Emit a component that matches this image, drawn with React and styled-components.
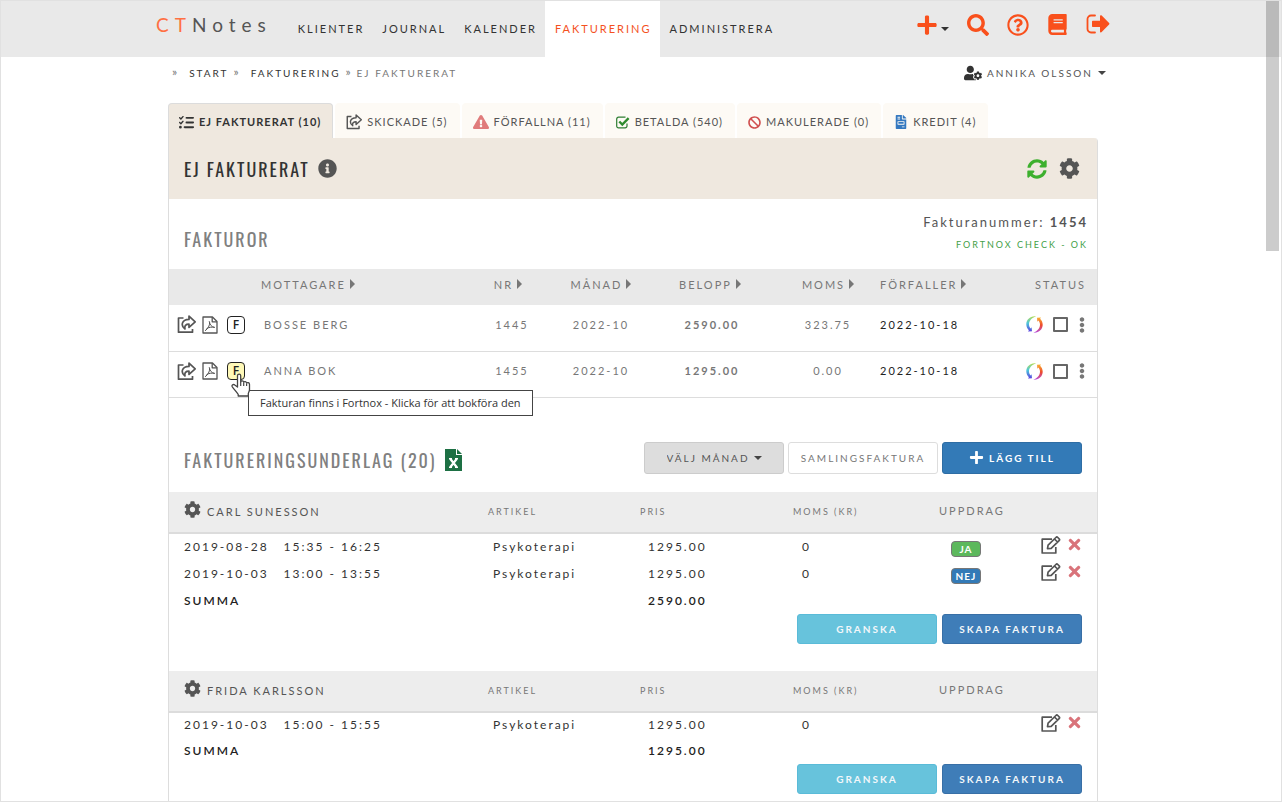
import React, { useState } from "react";
import styled, { createGlobalStyle } from "styled-components";
import {
  FaPlus,
  FaSearch,
  FaRegQuestionCircle,
  FaBook,
  FaUserCog,
  FaExclamationTriangle,
  FaBan,
  FaFileInvoice,
  FaInfoCircle,
  FaSyncAlt,
  FaCog,
  FaEllipsisV,
  FaTimes,
} from "react-icons/fa";
import { FaListCheck } from "react-icons/fa6";

const GlobalStyle = createGlobalStyle`
  *, *::before, *::after {
    box-sizing: border-box;
  }

  body {
    margin: 0;
    background: #fff;
    color: #333;
    font-family: "Lato", "Open Sans", sans-serif;
    font-size: 11px;
    letter-spacing: 2px;
    line-height: 16px;
  }

  a {
    color: inherit;
    text-decoration: none;
  }

  button, select, input {
    font: inherit;
    letter-spacing: inherit;
    color: inherit;
    margin: 0;
  }

  button {
    cursor: pointer;
  }

  svg {
    display: block;
    flex: none;
  }
`;

const Page = styled.div`
  position: relative;
  display: flex;
  flex-direction: column;
  min-height: 100vh;
  border: 1px solid #e1e1e1;
`;

const ScrollThumb = styled.div`
  position: absolute;
  top: 0;
  right: 2px;
  width: 13px;
  height: 250px;
  background: rgba(0, 0, 0, 0.2);
`;

const TopBar = styled.header`
  background: #e9e9e9;
  padding-right: 16px;
`;

const TopInner = styled.div`
  display: flex;
  align-items: stretch;
  height: 56px;
  max-width: 954px;
  margin: 0 auto;
`;

const Logo = styled.a`
  font-size: 19px;
  line-height: 24px;
  letter-spacing: 6px;
  color: #555;
  padding-top: 12px;
  margin-right: 16px;

  span {
    color: #ff7043;
  }
`;

const Nav = styled.nav`
  display: flex;
`;

const NavLink = styled.a`
  padding: 20px 8px 0 10px;
  background: ${({ $active }) => ($active ? "#fff" : "transparent")};
  color: ${({ $active }) => ($active ? "#f4511e" : "#333")};
`;

const TopTools = styled.div`
  display: flex;
  align-items: flex-start;
  gap: 18px;
  margin: 13px 0 0 auto;
  color: #f9501c;
`;

const IconButton = styled.button`
  display: inline-flex;
  align-items: center;
  gap: 3px;
  padding: 0;
  border: 0;
  background: none;
  color: ${({ $color }) => $color || "inherit"};
`;

const Caret = styled.span`
  border: 4px solid transparent;
  border-top-color: ${({ $color }) => $color || "#444"};
  border-bottom: 0;
  margin-top: ${({ $drop }) => ($drop ? "8px" : 0)};
`;

const Body = styled.main`
  flex: 1;
  display: flex;
  flex-direction: column;
  padding-right: 16px;
`;

const Container = styled.div`
  flex: 1;
  display: flex;
  flex-direction: column;
  width: 100%;
  max-width: 930px;
  margin: 0 auto;
`;

const SubBar = styled.div`
  display: flex;
  justify-content: space-between;
  align-items: center;
  height: 32px;
  padding-left: 4px;
  font-size: 10px;
`;

const Crumbs = styled.nav`
  display: flex;
  gap: 5px;
  color: #777;

  a {
    color: #333;
    margin-left: 6px;
  }
`;

const Separator = styled.span`
  font-size: 12px;
  line-height: 14px;
  letter-spacing: 1px;
`;

const UserButton = styled(IconButton)`
  gap: 5px;
  color: #555;
  margin-right: -8px;
`;

const Tabs = styled.nav`
  display: flex;
  gap: 2px;
  margin-top: 14px;
`;

const Tab = styled.a`
  display: flex;
  align-items: center;
  gap: 5px;
  height: 35px;
  padding: 2px 11px 0 10px;
  border: 1px solid ${({ $active }) => ($active ? "#dcdcdc" : "#fdfaf5")};
  border-bottom: 0;
  border-radius: 4px 4px 0 0;
  background: ${({ $active }) => ($active ? "#efe8df" : "#fdfaf5")};
  color: ${({ $active }) => ($active ? "#333" : "#555")};
  font-weight: ${({ $active }) => ($active ? 700 : 400)};
  letter-spacing: 1px;
`;

const Panel = styled.section`
  flex: 1;
  border: solid #ddd;
  border-width: 0 1px;
  border-top-right-radius: 4px;
  padding-bottom: 6px;
`;

const PanelHead = styled.div`
  display: flex;
  align-items: center;
  height: 61px;
  padding: 0 17px 0 15px;
  gap: 8px;
  background: #efe8df;
  border-top-right-radius: 3px;
  color: #555;
`;

const PanelTools = styled.div`
  display: flex;
  gap: 12px;
  margin-left: auto;
`;

const Title = styled.h2`
  margin: 0;
  font-family: "Oswald", "Liberation Sans Narrow", "Roboto", sans-serif;
  font-weight: 400;
  font-size: 18px;
  line-height: 28px;
  letter-spacing: 2px;
  color: ${({ $dark }) => ($dark ? "#333" : "#808080")};
`;

const BlockHead = styled.div`
  display: flex;
  justify-content: space-between;
  align-items: flex-end;
  height: 70px;
  padding: 0 9px 16px 15px;
`;

const NumberInfo = styled.div`
  text-align: right;
  font-size: 13px;
  color: #555;

  small {
    display: block;
    margin-top: 7px;
    font-size: 9px;
    color: #43a047;
  }
`;

const InvoiceTable = styled.table`
  width: 100%;
  table-layout: fixed;
  border-collapse: collapse;
  color: #777;

  th {
    height: 36px;
    padding: 0 0 4px;
    background: #e9e9e9;
    font-weight: 400;
  }

  td {
    height: 46px;
    padding: 0 0 6px;
    border-bottom: 1px solid #ddd;
    text-align: center;
  }
`;

const Th = styled.th`
  text-align: ${({ $align }) => $align || "center"};

  &&& {
    padding-left: ${({ $left }) => $left || 0}px;
    padding-right: ${({ $right }) => $right || 0}px;
  }
`;

const Td = styled.td`
  &&& {
    text-align: ${({ $align }) => $align || "center"};
    padding-left: ${({ $left }) => $left || 0}px;
  }
  color: ${({ $dark }) => ($dark ? "#222" : "inherit")};
`;

const SortButton = styled.button`
  display: inline-flex;
  align-items: center;
  gap: 4px;
  padding: 0;
  border: 0;
  background: none;

  &::after {
    content: "";
    border: 5px solid transparent;
    border-left-color: #777;
    border-right: 0;
    margin-bottom: 2px;
  }
`;

const RowActions = styled.div`
  position: relative;
  display: flex;
  align-items: center;
  gap: ${({ $lift }) => ($lift ? 5 : 6)}px;
  padding: 0 0 ${({ $lift }) => $lift || 0}px 8px;
  color: #555;
`;

const FortnoxButton = styled.button`
  width: 18px;
  height: 18px;
  margin-left: 3px;
  padding: 0;
  border: 1px solid #222;
  border-radius: 4px;
  background: ${({ $hovered }) => ($hovered ? "#fff9b8" : "#fff")};
  color: #222;
  font-family: "Open Sans", "Noto Sans", sans-serif;
  font-size: 12px;
  font-weight: 600;
  line-height: 16px;
  letter-spacing: 0;
`;

const Pointer = styled.div`
  position: absolute;
  top: 11px;
  left: 62px;
  z-index: 2;
`;

const Tooltip = styled.div`
  position: absolute;
  top: 28px;
  left: 79px;
  z-index: 1;
  padding: 3px 11px;
  border: 1px solid #444;
  background: #fff;
  color: #333;
  font-family: "Open Sans", "Noto Sans", sans-serif;
  line-height: 18px;
  letter-spacing: 0;
  white-space: nowrap;
`;

const StatusCell = styled.div`
  display: flex;
  align-items: center;
  justify-content: flex-end;
  gap: 10px;
  padding-right: 12px;
`;

const MoreButton = styled(IconButton)`
  justify-content: center;
  width: 7px;
  color: #777;
`;

const Check = styled.input`
  appearance: none;
  width: 15px;
  height: 15px;
  border: 2px solid #666;
  border-radius: 1px;
  background: #fff;

  &:checked {
    background: #666;
  }
`;

const BasisHead = styled.div`
  display: flex;
  align-items: flex-end;
  height: 94px;
  padding: 0 15px 18px;
`;

const TitleGroup = styled.div`
  display: flex;
  align-items: center;
  gap: 8px;
`;

const ButtonRow = styled.div`
  display: flex;
  justify-content: flex-end;
  gap: ${({ $gap }) => $gap || 5}px;
  margin-left: auto;
  padding-right: ${({ $right }) => $right || 0}px;
`;

const buttonColors = {
  plain: ["#fff", "#ddd", "#777"],
  primary: ["#337ab7", "#2e6da4", "#fff"],
  soft: ["#3f7db8", "#386fa6", "#f3f7fa"],
  info: ["#67c3dc", "#5abbd8", "#f3f7fa"],
};

const Button = styled.button`
  display: flex;
  align-items: center;
  justify-content: center;
  gap: 5px;
  width: ${({ $wide }) => ($wide ? 150 : 140)}px;
  height: ${({ $tall }) => ($tall ? 32 : 30)}px;
  padding: 0;
  border: 1px solid ${({ $kind }) => buttonColors[$kind][1]};
  border-radius: 3px;
  background: ${({ $kind }) => buttonColors[$kind][0]};
  color: ${({ $kind }) => buttonColors[$kind][2]};
  font-size: 10px;
  font-weight: ${({ $kind }) => ($kind === "plain" ? 400 : 700)};
`;

const MonthPicker = styled.label`
  display: flex;
  align-items: center;
  justify-content: center;
  gap: 4px;
  width: 140px;
  height: 32px;
  border: 1px solid #ccc;
  border-radius: 3px;
  background: #ddd;
  color: #555;
  font-size: 10px;

  select {
    appearance: none;
    padding: 0;
    border: 0;
    background: none;
  }
`;

const BasisTable = styled.table`
  width: 100%;
  table-layout: fixed;
  border-collapse: collapse;

  th {
    height: 41px;
    padding: 0;
    background: #ededed;
    border-bottom: 2px solid #dcdcdc;
    color: #777;
    font-size: 9px;
    font-weight: 400;
    text-align: left;
  }

  td {
    height: 26px;
    padding: 0;
    font-size: 12px;
  }

  tfoot th {
    height: 26px;
    background: none;
    border: 0;
    color: #222;
    font-size: 12px;
    font-weight: 600;
  }
`;

const ClientCell = styled.div`
  display: flex;
  align-items: center;
  gap: 6px;
  padding-left: 15px;
  font-size: 11px;
  color: #555;

  svg {
    margin-bottom: 4px;
  }
`;

const Assignment = styled.span`
  font-size: 11px;
`;

const Cell = styled.div`
  display: flex;
  gap: 15px;
  padding-left: ${({ $left }) => $left || 0}px;
`;

const Badge = styled.span`
  width: 30px;
  height: 16px;
  margin: 7px 0 4px 12px;
  border: 1px solid #777;
  border-radius: 4px;
  background: ${({ $yes }) => ($yes ? "#5cb85c" : "#337ab7")};
  color: #fff;
  font-size: 10px;
  font-weight: 700;
  line-height: 15px;
  letter-spacing: 1px;
  text-align: center;
`;

const BasisGroup = styled.div`
  margin-bottom: 27px;

  &:last-child {
    margin-bottom: 0;
  }
`;

const LogoutIcon = () => (
  <svg width="24" height="20" viewBox="0 0 24 20">
    <path
      d="M9 1.5H5a3.500 3.500 0 0 0-3.500 3.500v10A3.500 3.500 0 0 0 5 18.500h4"
      fill="none"
      stroke="currentColor"
      strokeWidth="1.8"
      strokeLinecap="round"
    />
    <path
      d="M7 6.800h7V2.200c0-.9 1-1.300 1.700-.7l7.400 7.500c.5.500.5 1.100 0 1.600l-7.400 7.500c-.7.600-1.700.2-1.700-.7V13H7c-.6 0-1-.4-1-1V7.800c0-.6.4-1 1-1z"
      fill="currentColor"
    />
  </svg>
);

const ShareIcon = ({ size = 19 }) => (
  <svg
    width={size}
    height={size}
    viewBox="0 0 19 19"
    fill="none"
    stroke="currentColor"
    strokeWidth="1.700"
    strokeLinejoin="round"
  >
    <path d="M6.500 3H1.500v14.200h14V14" />
    <path d="M12 1.200l6.200 5.600-6.200 5.600V9.200C8.700 9.200 7.300 10.600 8 14 3.500 10.800 4.500 4.600 12 4.400z" />
  </svg>
);

const PdfIcon = () => (
  <svg
    width="16"
    height="18"
    viewBox="0 0 16 18"
    fill="none"
    stroke="currentColor"
    strokeWidth="1.300"
    strokeLinejoin="round"
  >
    <path d="M1 1h9.500L15 5.500V17H1z" />
    <path d="M10.200 1v4.800H15" />
    <path
      d="M7.200 5.200c.8 3.300 1.800 5.600 5.500 6.300M7.600 6.500c.2 3-1.600 6.300-4.600 8.300M4.500 12.600c2.500-1.300 5-1.800 8.200-1.300"
      strokeWidth="1"
    />
  </svg>
);

const EditIcon = () => (
  <svg
    width="20"
    height="18"
    viewBox="0 0 20 18"
    fill="none"
    stroke="currentColor"
    strokeWidth="1.700"
    strokeLinejoin="round"
  >
    <path d="M11 3.200H1.200V17h13.600v-6" />
    <path d="M6.500 12.600l.6-3.400 7.800-7.700c.6-.6 1.300-.6 1.900 0l1.300 1.300c.6.600.6 1.300 0 1.900l-7.900 7.600zM13.500 3l3 3" />
  </svg>
);

const ExcelIcon = () => (
  <svg width="17" height="22" viewBox="0 0 17 22">
    <path d="M0 0h11v6h6v16H0z" fill="#1d7044" />
    <path d="M12 0l5 5h-5z" fill="#1d7044" />
    <path d="M5 9.500l7 9M12 9.500l-7 9" stroke="#fff" strokeWidth="2.200" />
    <path d="M4 9.500h3M10 9.500h3M4 18.500h3M10 18.500h3" stroke="#fff" />
  </svg>
);

const CheckedIcon = () => (
  <svg width="14" height="13" viewBox="0 0 14 13">
    <path
      d="M11 7.500v2.500a1.800 1.800 0 0 1-1.800 1.800H2.500A1.800 1.800 0 0 1 .7 10V3a1.800 1.800 0 0 1 1.800-1.800H9.500"
      fill="none"
      stroke="#2e7d32"
      strokeWidth="1.200"
    />
    <path d="M3.300 5.500l3 3L12.600 2.200" fill="none" stroke="#2e8b2e" strokeWidth="2.400" />
  </svg>
);

const SwishIcon = () => (
  <svg width="17" height="17" viewBox="0 0 17 17">
    <defs>
      <linearGradient id="swishLeft" x1="0" y1="0" x2="0" y2="1">
        <stop offset="0" stopColor="#b5dc55" />
        <stop offset="0.45" stopColor="#4cc8dc" />
        <stop offset="1" stopColor="#5a3fe0" />
      </linearGradient>
      <linearGradient id="swishRight" x1="0" y1="0" x2="0" y2="1">
        <stop offset="0" stopColor="#f9b233" />
        <stop offset="0.5" stopColor="#ee4b2b" />
        <stop offset="1" stopColor="#b44be0" />
      </linearGradient>
    </defs>
    <path
      d="M10 .4C4.500-.4.300 3.600.300 8.300c0 2.600 1.100 4.600 2.600 6L2 15.500l4-.3-.4-4-1 1.300C3.500 11.200 3 10 3 8.300 3 4.800 5.800 1.500 10 .4z"
      fill="url(#swishLeft)"
    />
    <path
      d="M7 16.600c5.500.8 9.700-3.200 9.700-7.900 0-2.600-1.100-4.600-2.600-6l.9-1.200-4 .3.400 4 1-1.300c1.100 1.300 1.600 2.500 1.600 4.200 0 3.500-2.800 6.800-7 7.900z"
      fill="url(#swishRight)"
    />
  </svg>
);

const HandIcon = () => (
  <svg width="20" height="24" viewBox="0 0 20 24">
    <path
      d="M6.500 14V2.800c0-2.200 3.200-2.200 3.200 0v6c.3-1.300 2.800-1.200 3 .4.600-1 2.700-.8 2.900.8.800-.8 2.900-.4 2.900 1.400v5.400c0 1.600-1.200 2.800-1.200 4v2.200H7.200v-1.600C5.600 19.400 3.500 16.500 1.300 13.800c-1-1.800 1.100-3 2.500-1.800L6.500 14z"
      fill="#fff"
      stroke="#444"
      strokeWidth="1.300"
      strokeLinejoin="round"
    />
    <path d="M9.700 9v4M12.700 9.500v3.500M15.600 10.500V13" stroke="#444" strokeWidth="1.200" />
  </svg>
);

const navItems = ["KLIENTER", "JOURNAL", "KALENDER", "FAKTURERING", "ADMINISTRERA"];

const tabs = [
  { label: "EJ FAKTURERAT (10)", icon: <FaListCheck size={15} /> },
  { label: "SKICKADE (5)", icon: <ShareIcon size={16} /> },
  { label: "FÖRFALLNA (11)", icon: <FaExclamationTriangle size={16} color="#e07b7b" /> },
  { label: "BETALDA (540)", icon: <CheckedIcon /> },
  { label: "MAKULERADE (0)", icon: <FaBan size={13} color="#d05050" /> },
  { label: "KREDIT (4)", icon: <FaFileInvoice size={14} color="#3478c0" /> },
];

const invoices = [
  { name: "BOSSE BERG", nr: "1445", month: "2022-10", amount: "2590.00", vat: "323.75", due: "2022-10-18" },
  { name: "ANNA BOK", nr: "1455", month: "2022-10", amount: "1295.00", vat: "0.00", due: "2022-10-18", hovered: true },
];

const groups = [
  {
    client: "CARL SUNESSON",
    sum: "2590.00",
    rows: [
      { date: "2019-08-28", time: "15:35 - 16:25", price: "1295.00", vat: "0", assignment: "JA" },
      { date: "2019-10-03", time: "13:00 - 13:55", price: "1295.00", vat: "0", assignment: "NEJ" },
    ],
  },
  {
    client: "FRIDA KARLSSON",
    sum: "1295.00",
    rows: [{ date: "2019-10-03", time: "15:00 - 15:55", price: "1295.00", vat: "0" }],
  },
];

const Header = () => (
  <TopBar>
    <TopInner>
      <Logo href="#">
        <span>CT</span>Notes
      </Logo>
      <Nav>
        {navItems.map((item) => (
          <NavLink key={item} href="#" $active={item === "FAKTURERING"}>
            {item}
          </NavLink>
        ))}
      </Nav>
      <TopTools>
        <IconButton aria-label="Lägg till">
          <FaPlus size={22} />
          <Caret $drop $color="#333" />
        </IconButton>
        <IconButton aria-label="Sök">
          <FaSearch size={22} />
        </IconButton>
        <IconButton aria-label="Hjälp">
          <FaRegQuestionCircle size={22} />
        </IconButton>
        <IconButton aria-label="Manual">
          <FaBook size={21} />
        </IconButton>
        <IconButton aria-label="Logga ut">
          <LogoutIcon />
        </IconButton>
      </TopTools>
    </TopInner>
  </TopBar>
);

const InvoiceRow = ({ invoice }) => {
  const [checked, setChecked] = useState(false);

  return (
    <tr>
      <td>
        <RowActions>
          <IconButton aria-label="Skicka">
            <ShareIcon />
          </IconButton>
          <IconButton aria-label="PDF">
            <PdfIcon />
          </IconButton>
          <FortnoxButton $hovered={invoice.hovered}>F</FortnoxButton>
          {invoice.hovered && (
            <>
              <Pointer>
                <HandIcon />
              </Pointer>
              <Tooltip role="tooltip">
                Fakturan finns i Fortnox - Klicka för att bokföra den
              </Tooltip>
            </>
          )}
        </RowActions>
      </td>
      <Td $align="left" $left={15}>{invoice.name}</Td>
      <td>{invoice.nr}</td>
      <td>{invoice.month}</td>
      <td><b>{invoice.amount}</b></td>
      <td>{invoice.vat}</td>
      <Td $align="left" $left={3} $dark>{invoice.due}</Td>
      <td>
        <StatusCell>
          <SwishIcon />
          <Check
            type="checkbox"
            aria-label={invoice.name}
            checked={checked}
            onChange={(e) => setChecked(e.target.checked)}
          />
          <MoreButton aria-label="Mer">
            <FaEllipsisV size={16} />
          </MoreButton>
        </StatusCell>
      </td>
    </tr>
  );
};

const Invoices = () => (
  <InvoiceTable>
    <colgroup>
      <col style={{ width: 80 }} />
      <col />
      <col style={{ width: 90 }} />
      <col style={{ width: 88 }} />
      <col style={{ width: 134 }} />
      <col style={{ width: 98 }} />
      <col style={{ width: 120 }} />
      <col style={{ width: 100 }} />
    </colgroup>
    <thead>
      <tr>
        <th />
        <Th $align="left" $left={12}><SortButton>MOTTAGARE</SortButton></Th>
        <Th $right={8}><SortButton>NR</SortButton></Th>
        <Th><SortButton>MÅNAD</SortButton></Th>
        <Th $right={4}><SortButton>BELOPP</SortButton></Th>
        <Th><SortButton>MOMS</SortButton></Th>
        <Th $align="left" $left={3}><SortButton>FÖRFALLER</SortButton></Th>
        <Th $align="right" $right={11}>STATUS</Th>
      </tr>
    </thead>
    <tbody>
      {invoices.map((invoice) => (
        <InvoiceRow key={invoice.nr} invoice={invoice} />
      ))}
    </tbody>
  </InvoiceTable>
);

const Group = ({ group }) => (
  <BasisGroup>
    <BasisTable>
      <colgroup>
        <col />
        <col style={{ width: 152 }} />
        <col style={{ width: 153 }} />
        <col style={{ width: 146 }} />
        <col style={{ width: 94 }} />
        <col style={{ width: 64 }} />
      </colgroup>
      <thead>
        <tr>
          <th>
            <ClientCell>
              <FaCog size={17} />
              {group.client}
            </ClientCell>
          </th>
          <th>ARTIKEL</th>
          <th>PRIS</th>
          <th>MOMS (KR)</th>
          <th><Assignment>UPPDRAG</Assignment></th>
          <th />
        </tr>
      </thead>
      <tbody>
        {group.rows.map((row) => (
          <tr key={row.date}>
            <td>
              <Cell $left={15}>
                <span>{row.date}</span>
                <span>{row.time}</span>
              </Cell>
            </td>
            <td><Cell $left={5}>Psykoterapi</Cell></td>
            <td><Cell $left={8}>{row.price}</Cell></td>
            <td><Cell $left={9}>{row.vat}</Cell></td>
            <td>
              {row.assignment && (
                <Cell>
                  <Badge $yes={row.assignment === "JA"}>{row.assignment}</Badge>
                </Cell>
              )}
            </td>
            <td>
              <RowActions $lift={5}>
                <IconButton aria-label="Redigera">
                  <EditIcon />
                </IconButton>
                <IconButton aria-label="Ta bort" $color="#d9737a">
                  <FaTimes size={17} />
                </IconButton>
              </RowActions>
            </td>
          </tr>
        ))}
      </tbody>
      <tfoot>
        <tr>
          <th><Cell $left={15}>SUMMA</Cell></th>
          <th />
          <th><Cell $left={8}>{group.sum}</Cell></th>
          <th />
          <th />
          <th />
        </tr>
      </tfoot>
    </BasisTable>
    <ButtonRow $right={15}>
      <Button $kind="info">GRANSKA</Button>
      <Button $kind="soft">SKAPA FAKTURA</Button>
    </ButtonRow>
  </BasisGroup>
);

const App = () => {
  return (
    <>
      <GlobalStyle />
      <Page>
        <Header />
        <Body>
          <Container>
            <SubBar>
              <Crumbs>
                <Separator>»</Separator>
                <a href="#">START</a>
                <Separator>»</Separator>
                <a href="#">FAKTURERING</a>
                <Separator>»</Separator>
                <span>EJ FAKTURERAT</span>
              </Crumbs>
              <UserButton>
                <FaUserCog size={18} color="#333" />
                ANNIKA OLSSON
                <Caret />
              </UserButton>
            </SubBar>

            <Tabs>
              {tabs.map((tab, index) => (
                <Tab key={tab.label} href="#" $active={index === 0}>
                  {tab.icon}
                  {tab.label}
                </Tab>
              ))}
            </Tabs>

            <Panel>
              <PanelHead>
                <Title $dark>EJ FAKTURERAT</Title>
                <FaInfoCircle size={19} />
                <PanelTools>
                  <IconButton aria-label="Uppdatera" $color="#3db02e">
                    <FaSyncAlt size={20} />
                  </IconButton>
                  <IconButton aria-label="Inställningar">
                    <FaCog size={21} />
                  </IconButton>
                </PanelTools>
              </PanelHead>

              <BlockHead>
                <Title>FAKTUROR</Title>
                <NumberInfo>
                  Fakturanummer: <b>1454</b>
                  <small>FORTNOX CHECK - OK</small>
                </NumberInfo>
              </BlockHead>
              <Invoices />

              <BasisHead>
                <TitleGroup>
                  <Title>FAKTURERINGSUNDERLAG (20)</Title>
                  <IconButton aria-label="Excel">
                    <ExcelIcon />
                  </IconButton>
                </TitleGroup>
                <ButtonRow $gap={4}>
                  <MonthPicker>
                    <select aria-label="Välj månad">
                      <option>VÄLJ MÅNAD</option>
                    </select>
                    <Caret />
                  </MonthPicker>
                  <Button $kind="plain" $tall $wide>SAMLINGSFAKTURA</Button>
                  <Button $kind="primary" $tall>
                    <FaPlus size={15} />
                    LÄGG TILL
                  </Button>
                </ButtonRow>
              </BasisHead>
              {groups.map((group) => (
                <Group key={group.client} group={group} />
              ))}
            </Panel>
          </Container>
        </Body>
        <ScrollThumb />
      </Page>
    </>
  );
};

export default App;
